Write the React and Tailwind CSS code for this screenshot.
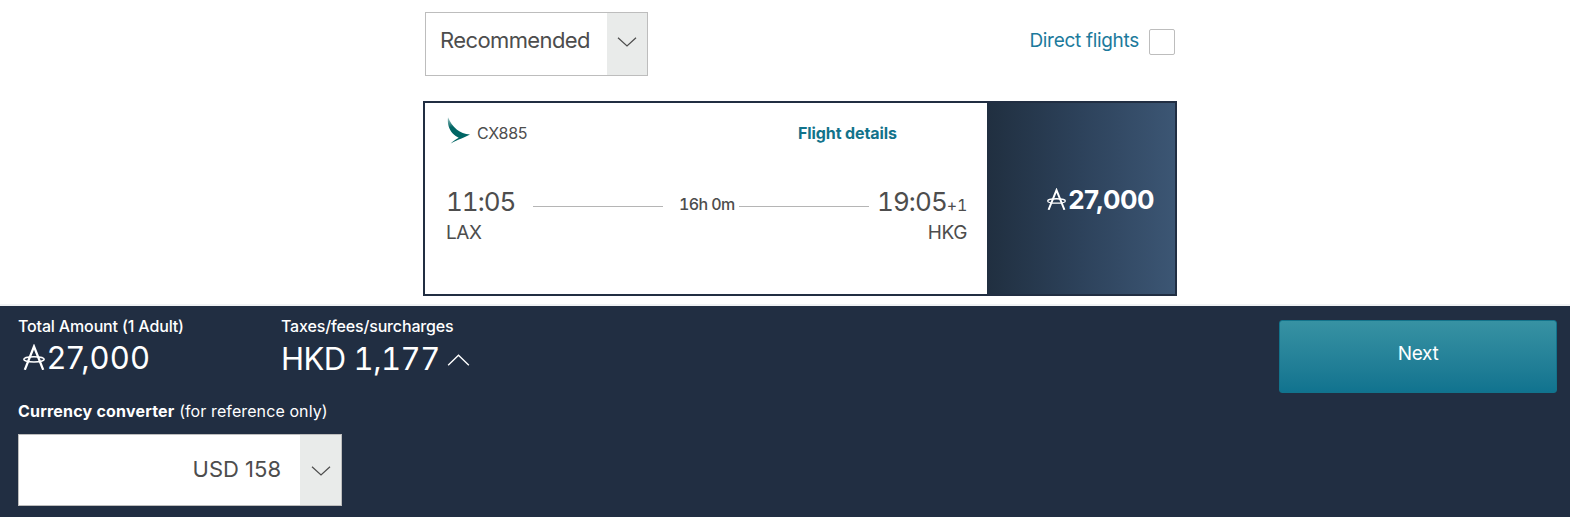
import React from "react";

function Chevron({ up = false, className = "" }) {
  return (
    <svg viewBox="0 0 20 10" fill="none" stroke="currentColor" strokeWidth="1.2" className={className}>
      <path d={up ? "M1 9.5 10 .8 19 9.5" : "M1 .7 10 9 19 .7"} />
    </svg>
  );
}

function AsiaMiles({ className = "" }) {
  return (
    <svg viewBox="0 0 22 26" preserveAspectRatio="none" fill="none" stroke="currentColor" className={className}>
      <path d="M1.800 25.800 11 2.500 20.200 25.800" strokeWidth="2.300" />
      <ellipse cx="11" cy="15.300" rx="10.200" ry="2.600" strokeWidth="1.500" />
    </svg>
  );
}

function BrushWing({ className = "" }) {
  return (
    <svg viewBox="0 0 23 28" className={className}>
      <defs>
        <linearGradient id="wing" x1="0" y1="0" x2="0.2" y2="1">
          <stop offset="0" stopColor="#006564" stopOpacity="0.35" />
          <stop offset="0.4" stopColor="#006564" />
        </linearGradient>
      </defs>
      <path
        d="M1 .2C2.700 4.500 6 9.500 10 12.700c3.500 2.800 7.500 4.200 13 4.900-2.500 1.400-5.500 2.600-8.500 3.800-3.700 1.500-7 2.700-10.800 5 1.800-2.200 5.200-3.900 8-5.700C7 18.500 3.200 14.500 1.700 9.500.8 6.200.6 3.200 1 .2Z"
        fill="url(#wing)"
      />
    </svg>
  );
}

function SortBar() {
  return (
    <div className="mx-auto flex h-[101px] w-[754px] items-start justify-between pt-3 pr-0.5 pl-0.5">
      <button className="flex h-16 w-[223px] border border-[#bdbdbd] bg-white text-[#4d4d4d]">
        <span className="w-[181px] pl-[14px] text-left text-[22px] leading-[55px] tracking-[-0.6px]">
          Recommended
        </span>
        <span className="flex h-full w-10 items-start justify-center bg-[#e9ebea] pt-6">
          <Chevron className="h-[10px] w-5" />
        </span>
      </button>
      <label className="flex pt-[17px] text-[#1c7a9c]">
        <span className="mr-[10px] text-[19px] leading-[24px] tracking-[-0.3px]">Direct flights</span>
        <span className="size-[26px] rounded-[2px] border border-[#bdbdbd] bg-white" />
      </label>
    </div>
  );
}

function FlightCard() {
  return (
    <div className="mx-auto flex h-[195px] w-[754px] border-2 border-[#212e42]">
      <div className="w-[562px] pt-[14px] pr-5 pl-[22px] text-[#4d4d4d]">
        <div className="flex h-7">
          <BrushWing className="h-7 w-[23px]" />
          <span className="ml-[7px] w-[321px] text-[16px] leading-[32px] tracking-[-0.3px]">CX885</span>
          <a className="text-[16px] font-bold leading-[32px] tracking-[-0.1px] text-[#12738b]">Flight details</a>
        </div>
        <div className="mt-[41px] flex h-[33px]">
          <span className="-ml-px w-[87px] text-[26px] leading-8 tracking-[-1px] tabular-nums">11:05</span>
          <div className="flex items-start">
            <span className="mt-5 h-px w-[130px] bg-[#b5b5b5]" />
            <span className="ml-4 w-[60px] pt-0.5 text-[16px] font-medium leading-[33px] tracking-[-0.6px] tabular-nums">
              16h 0m
            </span>
            <span className="mt-5 h-px w-[130px] bg-[#b5b5b5]" />
          </div>
          <span className="flex flex-1 items-baseline justify-end">
            <span className="text-[26px] leading-8 tracking-[-0.9px] tabular-nums">19:05</span>
            <span className="text-[16px] leading-8 tabular-nums tracking-[-0.3px]">+1</span>
          </span>
        </div>
        <div className="flex justify-between text-[19px] leading-[28px] tracking-[-0.4px]">
          <span className="-ml-px">LAX</span>
          <span>HKG</span>
        </div>
      </div>
      <div className="flex flex-1 items-center justify-end bg-linear-to-r from-[#202f40] via-[#2d425b] to-[#3c5674] pt-0.5 pr-[21px] text-white">
        <AsiaMiles className="mr-0.5 mb-0.5 h-[22px] w-[19px]" />
        <span className="text-[26px] font-bold leading-8 tracking-[-0.5px]">27,000</span>
      </div>
    </div>
  );
}

function SummaryBar() {
  return (
    <div className="mt-2 flex h-[213px] justify-between border-t-2 border-[#f0f2f4] bg-[#212e42] pr-[13px] pl-[18px] text-white">
      <div>
        <div className="flex pt-[10px]">
          <div className="w-[263px]">
            <div className="text-[16px] font-medium leading-5 tracking-[-0.15px]">Total Amount (1 Adult)</div>
            <div className="flex pt-[8px] pl-[5px]">
              <AsiaMiles className="mr-[2px] h-[26px] w-[22px]" />
              <span className="text-[31px] leading-[28px] tracking-[0.7px]">27,000</span>
            </div>
          </div>
          <div>
            <div className="text-[16px] font-medium leading-5 tracking-[-0.15px]">Taxes/fees/surcharges</div>
            <div className="flex pt-[8px]">
              <span className="w-[156px] text-[31px] leading-[29px] tracking-[-0.5px] tabular-nums">HKD 1,177</span>
              <Chevron up className="mt-[9px] ml-[10px] h-[14px] w-[23px]" />
            </div>
          </div>
        </div>
        <div className="mt-[28px] text-[16px] leading-5 tracking-[0.1px]">
          <span className="font-bold tracking-[0.2px]">Currency converter</span> (for reference only)
        </div>
        <button className="mt-[13px] flex h-[72px] w-[324px] border border-[#bdbdbd] bg-white text-[#4d4d4d]">
          <span className="w-[281px] pr-[19px] text-right text-[22px] leading-[69px]">USD 158</span>
          <span className="flex h-full flex-1 items-start justify-center bg-[#e9ebea] pt-[31px]">
            <Chevron className="h-[10px] w-5" />
          </span>
        </button>
      </div>
      <button className="mt-[14px] h-[73px] w-[278px] rounded-[3px] border border-[#12738b] bg-linear-to-b from-[#3792a3] to-[#10738f] pb-[4px] text-[19px] tracking-[-0.3px]">
        Next
      </button>
    </div>
  );
}

export default function App() {
  return (
    <div className="h-[517px] w-[1570px] overflow-hidden bg-white font-['Inter',sans-serif] whitespace-nowrap">
      <div className="pl-[30px]">
        <SortBar />
        <FlightCard />
      </div>
      <SummaryBar />
    </div>
  );
}
